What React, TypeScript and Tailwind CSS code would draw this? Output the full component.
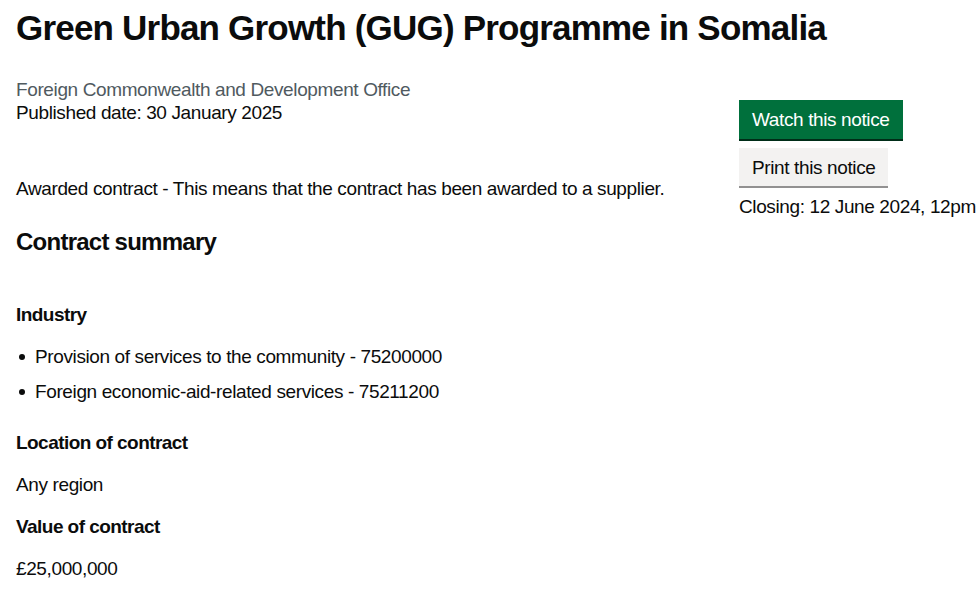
export default function App() {
  return (
    <div
      className="min-h-[594px] bg-white text-[#0b0c0c] tracking-[-0.38px]"
      style={{ fontFamily: '"Liberation Sans", Arial, sans-serif' }}
    >
      <div className="px-4 pt-[8px]">
        <h1 className="text-[35px] font-bold leading-[40px] tracking-[-0.8px]">
          Green Urban Growth (GUG) Programme in Somalia
        </h1>
        <div className="flex">
          <div className="flex-1">
            <p className="mt-[30px] text-[19px] leading-[23px] text-[#505a5f]">
              Foreign Commonwealth and Development Office
            </p>
            <p className="text-[19px] leading-[23px]">Published date: 30 January 2025</p>
            <p className="mt-[53px] text-[19px] leading-[23px]">
              Awarded contract - This means that the contract has been awarded to a supplier.
            </p>
            <h2 className="mt-[27px] text-[24px] font-bold leading-[30px] tracking-[-0.75px]">
              Contract summary
            </h2>
            <h3 className="mt-[45px] text-[19px] font-bold leading-[25px] tracking-[-0.55px]">
              Industry
            </h3>
            <ul className="mt-[17px] flex flex-col gap-[10px] text-[19px] leading-[25px]">
              <li className="flex items-center">
                <span className="mr-[10px] ml-[3px] h-[6px] w-[6px] rounded-full bg-[#0b0c0c]" />
                Provision of services to the community - 75200000
              </li>
              <li className="flex items-center">
                <span className="mr-[10px] ml-[3px] h-[6px] w-[6px] rounded-full bg-[#0b0c0c]" />
                Foreign economic-aid-related services - 75211200
              </li>
            </ul>
            <h3 className="mt-[26px] text-[19px] font-bold leading-[25px] tracking-[-0.55px]">
              Location of contract
            </h3>
            <p className="mt-[17px] text-[19px] leading-[25px]">Any region</p>
            <h3 className="mt-[17px] text-[19px] font-bold leading-[25px] tracking-[-0.55px]">
              Value of contract
            </h3>
            <p className="mt-[17px] text-[19px] leading-[25px]">£25,000,000</p>
          </div>
          <div className="w-[241px] shrink-0 pt-[52px] pl-[16px]">
            <button className="block h-[39px] bg-[#00703c] px-[13px] text-[19px] leading-[23px] text-white shadow-[0_2px_0_#002d18]">
              Watch this notice
            </button>
            <button className="mt-[9px] block h-[38px] bg-[#f3f2f1] px-[13px] text-[19px] leading-[23px] text-[#0b0c0c] shadow-[0_2px_0_#929191]">
              Print this notice
            </button>
            <p className="mt-[8px] whitespace-nowrap text-[19px] leading-[25px]">
              Closing: 12 June 2024, 12pm
            </p>
          </div>
        </div>
      </div>
    </div>
  );
}
